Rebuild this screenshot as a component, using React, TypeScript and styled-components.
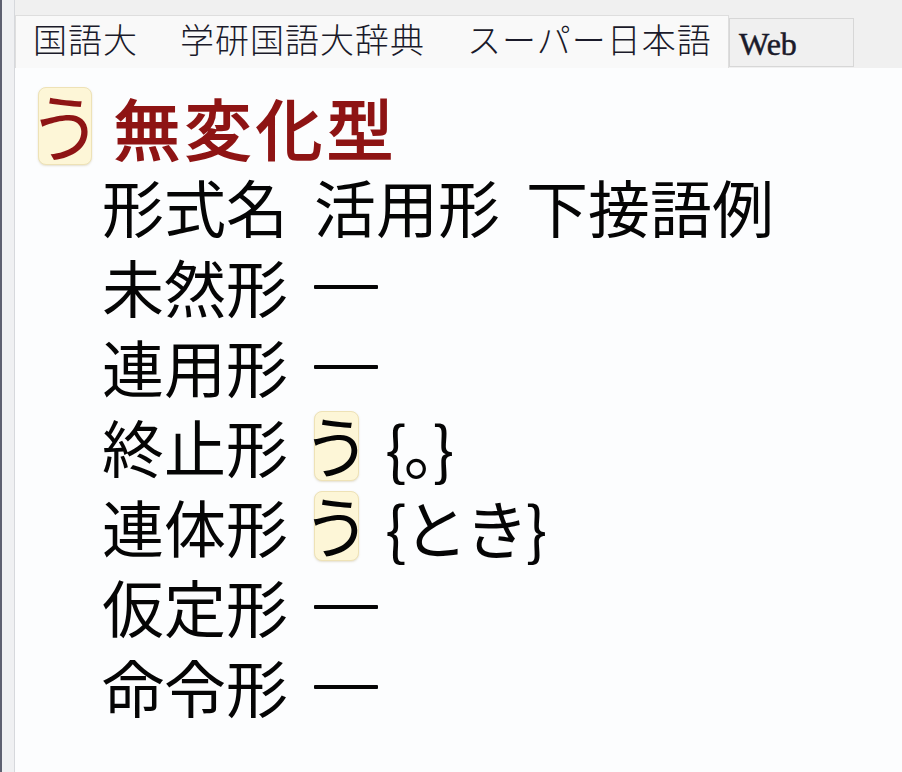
import React from "react";
import styled, { createGlobalStyle } from "styled-components";

const Global = createGlobalStyle`
  html, body { margin: 0; padding: 0; background: #fcfdfe; }
  body { font-family: "Noto Sans CJK JP", "Noto Sans", sans-serif; }
`;

const Frame = styled.div`
  display: flex;
  width: 902px;
  height: 772px;
  overflow: hidden;
`;

const Rail = styled.div`
  flex: 0 0 12px;
  background: #eff0f2;
  border-left: 2px solid #5d6070;
  border-right: 1px solid #d6d8dc;
`;

const Main = styled.div`
  flex: 1;
  display: flex;
  flex-direction: column;
  min-width: 0;
`;

const TabBar = styled.div`
  height: 68px;
  box-sizing: border-box;
  padding-top: 15px;
  background: #f0f0f0;
  display: flex;
  align-items: flex-end;
`;

const Tab = styled.div<{ $active?: boolean }>`
  box-sizing: border-box;
  height: ${(p) => (p.$active ? "53px" : "49px")};
  align-self: ${(p) => (p.$active ? "flex-end" : "flex-start")};
  margin-top: ${(p) => (p.$active ? "0" : "3px")};
  width: ${(p) => (p.$active ? "714px" : "125px")};
  padding-left: ${(p) => (p.$active ? "17px" : "9px")};
  padding-bottom: ${(p) => (p.$active ? "1px" : "0")};
  background: ${(p) => (p.$active ? "#f9f9f9" : "#f0f0f0")};
  border: 1px solid ${(p) => (p.$active ? "#dedede" : "#d7d7d7")};
  border-bottom: ${(p) => (p.$active ? "none" : "1px solid #d7d7d7")};
  display: flex;
  align-items: center;
  gap: 42px;
  color: #1a1a2a;
`;

const TabLabel = styled.span`
  font-family: "Noto Sans CJK JP", sans-serif;
  font-weight: 300;
  font-size: 34px;
  line-height: 1;
  letter-spacing: 1px;
  margin-bottom: 6px;
`;

const WebLabel = styled.span`
  font-family: "Liberation Serif", serif;
  font-size: 32px;
  line-height: 1;
  color: #1a1a2a;
  -webkit-text-stroke: 0.5px #1a1a2a;
  margin-top: 2px;
`;

const Content = styled.div`
  flex: 1;
  background: #fcfdfe;
  padding: 18px 0 0 23px;
  display: flex;
  flex-direction: column;
`;

const Heading = styled.div`
  height: 80px;
  display: flex;
  align-items: center;
  gap: 22px;
`;

const Badge = styled.span<{ $w: number; $h: number; $size: number; $color: string }>`
  display: inline-flex;
  align-items: center;
  justify-content: center;
  width: ${(p) => p.$w}px;
  height: ${(p) => p.$h}px;
  box-sizing: border-box;
  background: #fdf6d7;
  border: 1px solid #eee2b6;
  border-radius: 8px;
  box-shadow: 0 1px 2px rgba(160, 140, 80, 0.25);
  font-size: ${(p) => p.$size}px;
  line-height: 1;
  color: ${(p) => p.$color};
  white-space: nowrap;
  padding-bottom: 4px;
`;

const BadgeGlyph = styled.span<{ $pull: number }>`
  display: inline-block;
  margin: 0 -${(p) => p.$pull}px;
`;

const Title = styled.span`
  font-size: 66px;
  font-weight: 400;
  -webkit-text-stroke: 2px #8e1414;
  color: #8e1414;
  letter-spacing: 5px;
  line-height: 1;
`;

const Rows = styled.div`
  padding-left: 64px;
  display: flex;
  flex-direction: column;
`;

const Row = styled.div`
  height: 80px;
  display: flex;
  align-items: center;
  gap: 26px;
  font-size: 62px;
  line-height: 1;
  color: #050505;
`;

const Cell = styled.span`
  white-space: nowrap;
`;

const Dash = styled.span`
  display: inline-block;
  width: 64px;
  height: 4px;
  background: #050505;
  border-radius: 1px;
  margin-top: 2px;
`;

const Example = styled.span`
  white-space: nowrap;
  letter-spacing: -3px;
  font-size: 64px;
`;

type RowData = { label: string; form?: boolean; example?: string };

const rows: RowData[] = [
  { label: "未然形" },
  { label: "連用形" },
  { label: "終止形", form: true, example: "{。}" },
  { label: "連体形", form: true, example: "{とき}" },
  { label: "仮定形" },
  { label: "命令形" },
];

export default function App() {
  return (
    <>
      <Global />
      <Frame>
        <Rail />
        <Main>
          <TabBar>
            <Tab $active>
              <TabLabel>国語大</TabLabel>
              <TabLabel>学研国語大辞典</TabLabel>
              <TabLabel>スーパー日本語</TabLabel>
            </Tab>
            <Tab>
              <WebLabel>Web</WebLabel>
            </Tab>
          </TabBar>
          <Content>
            <Heading>
              <Badge $w={54} $h={78} $size={74} $color="#8e1414">
                <BadgeGlyph $pull={10}>う</BadgeGlyph>
              </Badge>
              <Title>無変化型</Title>
            </Heading>
            <Rows>
              <Row>
                <Cell>形式名</Cell>
                <Cell>活用形</Cell>
                <Cell>下接語例</Cell>
              </Row>
              {rows.map((r) => (
                <Row key={r.label}>
                  <Cell>{r.label}</Cell>
                  {r.form ? (
                    <>
                      <Badge $w={45} $h={70} $size={68} $color="#050505">
                        <BadgeGlyph $pull={12}>う</BadgeGlyph>
                      </Badge>
                      <Example>{r.example}</Example>
                    </>
                  ) : (
                    <Dash />
                  )}
                </Row>
              ))}
            </Rows>
          </Content>
        </Main>
      </Frame>
    </>
  );
}
